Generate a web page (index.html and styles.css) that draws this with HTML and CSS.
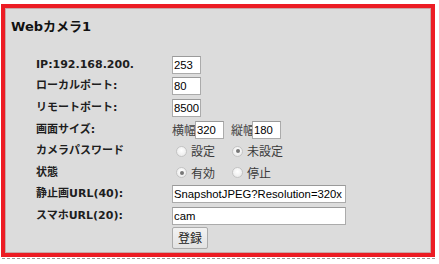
FILE: index.html
```html
<!DOCTYPE html>
<html lang="ja">
<head>
<meta charset="utf-8">
<link rel="stylesheet" href="styles.css">
</head>
<body>
<div class="panel">
  <h1 class="title">Webカメラ1</h1>
  <div class="form">
    <div class="label">IP:192.168.200.</div>
    <div class="value"><input class="box w3" type="text" value="253"></div>

    <div class="label">ローカルポート:</div>
    <div class="value"><input class="box w3" type="text" value="80"></div>

    <div class="label">リモートポート:</div>
    <div class="value"><input class="box w3" type="text" value="8500"></div>

    <div class="label">画面サイズ:</div>
    <div class="value"><span class="cap">横幅</span><input class="box w3" type="text" value="320"><span class="cap gap">縦幅</span><input class="box w3" type="text" value="180"></div>

    <div class="label">カメラパスワード</div>
    <div class="value"><span class="radio"></span><span class="opt">設定</span><span class="radio on"></span><span class="opt">未設定</span></div>

    <div class="label">状態</div>
    <div class="value"><span class="radio on"></span><span class="opt">有効</span><span class="radio"></span><span class="opt">停止</span></div>

    <div class="label">静止画URL(40):</div>
    <div class="value"><input class="box wide" type="text" value="SnapshotJPEG?Resolution=320x"></div>

    <div class="label">スマホURL(20):</div>
    <div class="value"><input class="box wide" type="text" value="cam"></div>

    <div class="label"></div>
    <div class="value"><button class="btn" type="button">登録</button></div>
  </div>
</div>
<div class="dash"></div>
</body>
</html>
```
FILE: styles.css
```css
html, body {
  margin: 0;
  padding: 0;
  background: #ffffff;
}
body {
  font-family: "DejaVu Sans", "Noto Sans CJK JP", sans-serif;
  color: #1a1a1a;
}
.panel {
  margin: 4px 0 0 1px;
  width: 434px;
  height: 253px;
  box-sizing: border-box;
  border: 4px solid #ec1c24;
  background: #dcdcdc;
  box-shadow: inset 0 0 0 1px #c8a8a8;
  padding: 1px;
}
.title {
  margin: 0;
  padding: 10px 0 0 5px;
  font-size: 13px;
  line-height: 16px;
  font-weight: bold;
  color: #111;
}
.form {
  display: grid;
  grid-template-columns: 136px 1fr;
  grid-auto-rows: 21.6px;
  align-items: center;
  margin: 19px 0 0 30px;
}
.label {
  font-size: 11px;
  line-height: 14px;
  font-weight: bold;
  color: #1e1e1e;
  white-space: nowrap;
}
.value {
  display: flex;
  align-items: center;
  font-family: "Noto Sans CJK JP", sans-serif;
  font-size: 12px;
  line-height: 14px;
  color: #333;
  white-space: nowrap;
}
.box {
  flex: none;
  height: 18px;
  box-sizing: border-box;
  border: 1px solid #ababab;
  border-top-color: #9a9a9a;
  background: #fff;
  font-family: "Liberation Sans", Arial, sans-serif;
  font-size: 11.3px;
  color: #000;
  padding: 0 1px;
  margin: 0;
  outline: none;
}
.w3 { width: 29px; }
.wide { width: 174px; }
.cap {
  flex: none;
  color: #444;
  width: 23px;
}
.cap.gap {
  margin-left: 7px;
  width: 21px;
}
.radio {
  flex: none;
  width: 11px;
  height: 11px;
  box-sizing: border-box;
  border: 1px solid #c4c4c4;
  border-radius: 50%;
  background: radial-gradient(circle at 50% 40%, #ffffff 0%, #f0f0f0 60%, #e2e2e2 100%);
  margin-left: 4px;
  margin-right: 4px;
  position: relative;
}
.radio.on::after {
  content: "";
  position: absolute;
  left: 2.5px;
  top: 2.5px;
  width: 4px;
  height: 4px;
  border-radius: 50%;
  background: #777;
}
.opt {
  flex: none;
  color: #3a3a3a;
  margin-right: 13px;
}
.btn {
  width: 36px;
  height: 22px;
  margin: 0;
  padding: 0;
  border: 1px solid #ababab;
  border-radius: 2px;
  background: linear-gradient(#f2f2f2, #e2e2e2);
  font-family: "Noto Sans CJK JP", sans-serif;
  font-size: 12px;
  color: #222;
}
.dash {
  margin: 1px 0 0 2px;
  width: 433px;
  border-top: 1px dashed #9a9a9a;
}
```
